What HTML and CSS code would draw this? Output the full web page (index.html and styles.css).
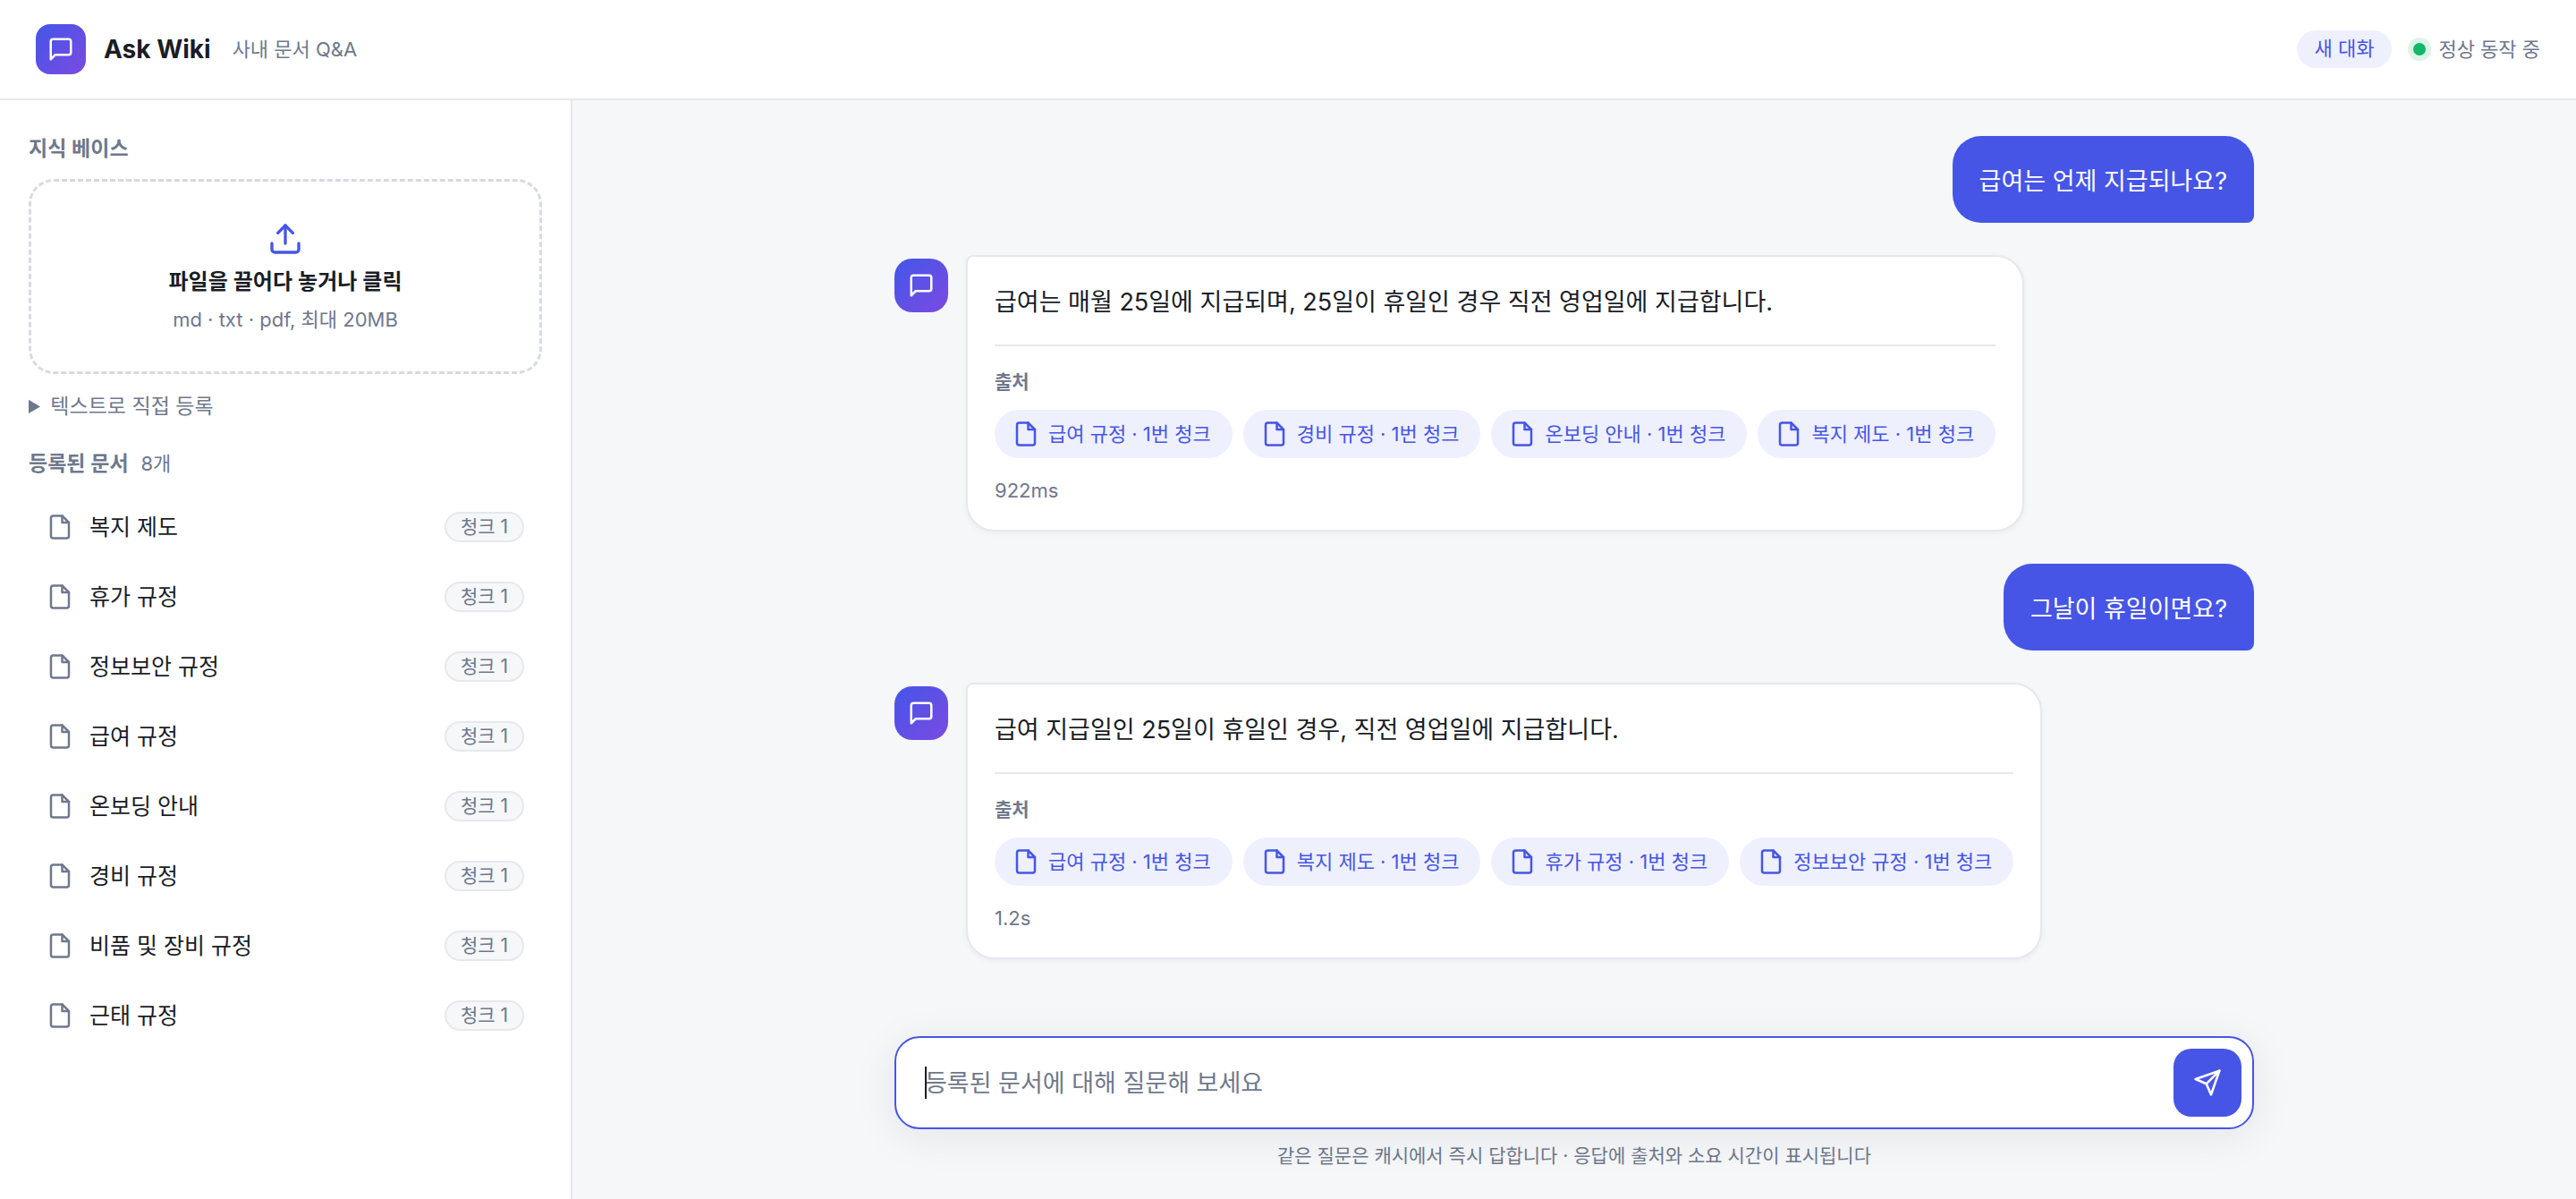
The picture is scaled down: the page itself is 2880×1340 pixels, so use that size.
FILE: index.html
```html
<!DOCTYPE html>
<html lang="ko">
<head>
<meta charset="utf-8">
<meta name="viewport" content="width=device-width, initial-scale=1">
<title>Ask Wiki</title>
<link rel="stylesheet" href="styles.css">
</head>
<body>
<svg class="sprite" aria-hidden="true">
  <symbol id="chat" viewBox="0 0 24 24"><path d="M21 15a2 2 0 0 1-2 2H7l-4 4V5a2 2 0 0 1 2-2h14a2 2 0 0 1 2 2z"/></symbol>
  <symbol id="file" viewBox="0 0 24 24"><path d="M14 2H6a2 2 0 0 0-2 2v16a2 2 0 0 0 2 2h12a2 2 0 0 0 2-2V8z"/><path d="M14 2v6h6"/></symbol>
  <symbol id="upload" viewBox="0 0 24 24"><path d="M21 15v4a2 2 0 0 1-2 2H5a2 2 0 0 1-2-2v-4"/><path d="M17 8l-5-5-5 5"/><path d="M12 3v12"/></symbol>
  <symbol id="send" viewBox="0 0 24 24"><path d="M22 2L11 13"/><path d="M22 2l-7 20-4-9-9-4 20-7z"/></symbol>
</svg>

<header class="topbar">
  <span class="logo"><svg class="icon"><use href="#chat"/></svg></span>
  <h1 class="brand">Ask Wiki</h1>
  <span class="tagline">사내 문서 Q&amp;A</span>
  <div class="topbar-end">
    <button class="new-chat" type="button">새 대화</button>
    <span class="status"><span class="status-dot"></span>정상 동작 중</span>
  </div>
</header>

<div class="workspace">
  <aside class="sidebar">
    <h2 class="section-title">지식 베이스</h2>
    <button class="dropzone" type="button">
      <svg class="icon"><use href="#upload"/></svg>
      <strong class="drop-title">파일을 끌어다 놓거나 클릭</strong>
      <span class="drop-hint">md · txt · pdf, 최대 20MB</span>
    </button>
    <details class="manual">
      <summary>텍스트로 직접 등록</summary>
    </details>
    <h2 class="section-title">등록된 문서 <span class="count">8개</span></h2>
    <ul class="docs">
      <li class="doc"><svg class="icon"><use href="#file"/></svg><span class="doc-name">복지 제도</span><span class="badge">청크 1</span></li>
      <li class="doc"><svg class="icon"><use href="#file"/></svg><span class="doc-name">휴가 규정</span><span class="badge">청크 1</span></li>
      <li class="doc"><svg class="icon"><use href="#file"/></svg><span class="doc-name">정보보안 규정</span><span class="badge">청크 1</span></li>
      <li class="doc"><svg class="icon"><use href="#file"/></svg><span class="doc-name">급여 규정</span><span class="badge">청크 1</span></li>
      <li class="doc"><svg class="icon"><use href="#file"/></svg><span class="doc-name">온보딩 안내</span><span class="badge">청크 1</span></li>
      <li class="doc"><svg class="icon"><use href="#file"/></svg><span class="doc-name">경비 규정</span><span class="badge">청크 1</span></li>
      <li class="doc"><svg class="icon"><use href="#file"/></svg><span class="doc-name">비품 및 장비 규정</span><span class="badge">청크 1</span></li>
      <li class="doc"><svg class="icon"><use href="#file"/></svg><span class="doc-name">근태 규정</span><span class="badge">청크 1</span></li>
    </ul>
  </aside>

  <main class="chat">
    <div class="messages">
      <p class="question">급여는 언제 지급되나요?</p>
      <article class="answer">
        <span class="avatar"><svg class="icon"><use href="#chat"/></svg></span>
        <div class="bubble">
          <p class="answer-text">급여는 매월 25일에 지급되며, 25일이 휴일인 경우 직전 영업일에 지급합니다.</p>
          <div class="sources">
            <h3 class="sources-title">출처</h3>
            <div class="chips">
              <button class="chip" type="button"><svg class="icon"><use href="#file"/></svg>급여 규정 · 1번 청크</button>
              <button class="chip" type="button"><svg class="icon"><use href="#file"/></svg>경비 규정 · 1번 청크</button>
              <button class="chip" type="button"><svg class="icon"><use href="#file"/></svg>온보딩 안내 · 1번 청크</button>
              <button class="chip" type="button"><svg class="icon"><use href="#file"/></svg>복지 제도 · 1번 청크</button>
            </div>
          </div>
          <p class="elapsed">922ms</p>
        </div>
      </article>
      <p class="question">그날이 휴일이면요?</p>
      <article class="answer">
        <span class="avatar"><svg class="icon"><use href="#chat"/></svg></span>
        <div class="bubble">
          <p class="answer-text">급여 지급일인 25일이 휴일인 경우, 직전 영업일에 지급합니다.</p>
          <div class="sources">
            <h3 class="sources-title">출처</h3>
            <div class="chips">
              <button class="chip" type="button"><svg class="icon"><use href="#file"/></svg>급여 규정 · 1번 청크</button>
              <button class="chip" type="button"><svg class="icon"><use href="#file"/></svg>복지 제도 · 1번 청크</button>
              <button class="chip" type="button"><svg class="icon"><use href="#file"/></svg>휴가 규정 · 1번 청크</button>
              <button class="chip" type="button"><svg class="icon"><use href="#file"/></svg>정보보안 규정 · 1번 청크</button>
            </div>
          </div>
          <p class="elapsed">1.2s</p>
        </div>
      </article>
    </div>
    <form class="composer">
      <div class="field">
        <span class="caret"></span>
        <input class="prompt" type="text" aria-label="질문" placeholder="등록된 문서에 대해 질문해 보세요">
        <button class="send" type="button" aria-label="보내기"><svg class="icon"><use href="#send"/></svg></button>
      </div>
      <p class="note">같은 질문은 캐시에서 즉시 답합니다 · 응답에 출처와 소요 시간이 표시됩니다</p>
    </form>
  </main>
</div>
</body>
</html>
```
FILE: styles.css
```css
:root {
  --accent: #4655e6;
  --accent-soft: #eef0fe;
  --ink: #1a1d26;
  --muted: #6f788c;
  --line: #e7e8ee;
  --surface: #ffffff;
  --page: #f5f7f9;
}

*, *::before, *::after { box-sizing: border-box; }

body {
  display: flex;
  flex-direction: column;
  min-height: 100vh;
  margin: 0;
  background: var(--page);
  color: var(--ink);
  font-family: Inter, "Noto Sans CJK KR", sans-serif;
  font-size: 22px;
  line-height: 32px;
}

h1, h2, h3, p, ul { margin: 0; padding: 0; }
ul { list-style: none; }
button, input { font: inherit; color: inherit; border: 0; padding: 0; background: none; }
button { cursor: pointer; }

.sprite { position: absolute; width: 0; height: 0; }

.icon {
  flex: none;
  width: 30px;
  height: 30px;
  fill: none;
  stroke: currentColor;
  stroke-width: 2;
  stroke-linecap: round;
  stroke-linejoin: round;
}

/* Top bar */
.topbar {
  display: flex;
  align-items: center;
  height: 112px;
  padding: 0 40px;
  background: var(--surface);
  border-bottom: 2px solid var(--line);
}

.logo, .avatar {
  display: flex;
  flex: none;
  align-items: center;
  justify-content: center;
  background: linear-gradient(135deg, #4356e8, #7c4ae2);
  color: #fff;
}
.logo { width: 56px; height: 56px; border-radius: 16px; }

.brand { margin-left: 20px; font-size: 28px; font-weight: 700; }
.tagline { margin-left: 24px; color: var(--muted); }
.topbar-end { display: flex; align-items: center; gap: 24px; margin-left: auto; }
.new-chat {
  height: 42px;
  padding: 0 20px 2px;
  border-radius: 21px;
  background: var(--accent-soft);
  color: var(--accent);
}
.status { display: flex; align-items: center; gap: 14px; color: var(--muted); }
.status-dot {
  width: 14px;
  height: 14px;
  border-radius: 50%;
  background: #12b76a;
  box-shadow: 0 0 0 6px #dcf4e8;
}

/* Sidebar */
.workspace { display: flex; flex: 1; }

.sidebar {
  flex: none;
  width: 640px;
  padding: 38px 32px;
  background: var(--surface);
  border-right: 2px solid var(--line);
}
.section-title { color: var(--muted); font-size: 23px; font-weight: 600; }
.count { margin-left: 8px; font-size: 22px; font-weight: 400; }

.dropzone {
  display: flex;
  flex-direction: column;
  align-items: center;
  width: 100%;
  height: 218px;
  margin-top: 18px;
  padding-top: 44px;
  border: 3px dashed #d8dae2;
  border-radius: 28px;
}
.dropzone .icon { width: 40px; height: 40px; color: var(--accent); }
.drop-title { margin-top: 12px; font-size: 24px; font-weight: 600; }
.drop-hint { margin-top: 10px; color: var(--muted); }

.manual { margin: 20px 0 32px; color: var(--muted); font-size: 23px; }
.manual summary { cursor: pointer; }

.docs { margin-top: 16px; }
.doc {
  display: flex;
  align-items: center;
  gap: 18px;
  height: 78px;
  padding: 0 20px;
}
.doc .icon { color: var(--muted); }
.doc-name { flex: 1; font-size: 25px; }
.badge {
  height: 34px;
  padding: 0 16px;
  border: 2px solid var(--line);
  border-radius: 17px;
  background: var(--page);
  color: var(--muted);
  font-size: 21px;
  line-height: 30px;
}

/* Conversation */
.chat {
  display: flex;
  flex: 1;
  flex-direction: column;
  align-items: center;
  padding: 40px 48px 32px;
}
.messages, .composer { width: 100%; max-width: 1520px; }
.messages { display: flex; flex: 1; flex-direction: column; gap: 36px; }

.question {
  align-self: flex-end;
  padding: 26px 30px 22px;
  border-radius: 32px 32px 8px 32px;
  background: var(--accent);
  color: #fff;
  font-size: 27px;
  line-height: 49px;
}

.answer { display: flex; align-items: flex-start; gap: 20px; }
.avatar { width: 60px; height: 60px; margin-top: 4px; border-radius: 20px; }
.bubble {
  padding: 26px 30px 28px;
  border: 2px solid var(--line);
  border-radius: 8px 32px 32px 32px;
  background: var(--surface);
  box-shadow: 0 2px 6px rgba(20, 24, 40, 0.05);
}
.answer-text { font-size: 27px; line-height: 50px; }
.sources { margin-top: 22px; padding-top: 24px; border-top: 2px solid var(--line); }
.sources-title { color: var(--muted); font-size: 21px; font-weight: 600; }
.chips { display: flex; flex-wrap: wrap; gap: 12px; margin-top: 15px; }
.chip {
  display: flex;
  align-items: center;
  gap: 10px;
  height: 54px;
  padding: 0 24px 0 20px;
  border-radius: 27px;
  background: var(--accent-soft);
  color: var(--accent);
}
.elapsed { margin-top: 20px; color: var(--muted); }

/* Composer */
.field {
  position: relative;
  display: flex;
  align-items: center;
  height: 104px;
  padding: 0 12px 0 32px;
  border: 2px solid var(--accent);
  border-radius: 28px;
  background: var(--surface);
  box-shadow: 0 8px 48px rgba(20, 24, 40, 0.08);
}
.caret {
  position: absolute;
  left: 32px;
  width: 2px;
  height: 36px;
  background: var(--ink);
}
.prompt { flex: 1; min-width: 0; padding-top: 2px; font-size: 27px; line-height: 40px; outline: 0; }
.prompt::placeholder { color: var(--muted); opacity: 1; }
.send {
  display: flex;
  flex: none;
  align-items: center;
  justify-content: center;
  width: 76px;
  height: 76px;
  border-radius: 20px;
  background: var(--accent);
  color: #fff;
}
.send .icon { width: 32px; height: 32px; }
.note { margin-top: 14px; color: var(--muted); font-size: 21px; text-align: center; }
```
